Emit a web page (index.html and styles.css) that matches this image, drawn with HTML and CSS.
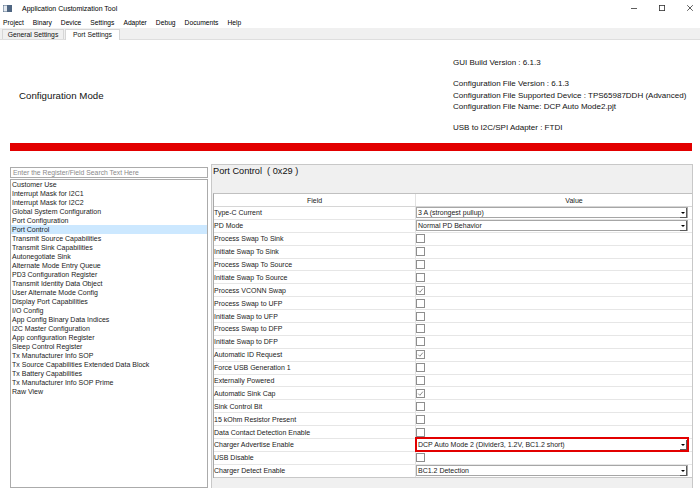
FILE: index.html
```html
<!DOCTYPE html>
<html>
<head>
<meta charset="utf-8">
<title>Application Customization Tool</title>
<link rel="stylesheet" href="styles.css">
</head>
<body>
<div class="titlebar">
  <svg class="appicon" viewBox="0 0 9 7" width="9" height="7"><rect x="0" y="0" width="9" height="7" fill="#4f6682"/><rect x="0.5" y="0.5" width="3.5" height="6" fill="#e4e9ef"/></svg>
  <span class="title">Application Customization Tool</span>
  <div class="controls">
    <svg viewBox="0 0 6 6" width="6" height="6"><path d="M0 3.5 H6" stroke="#333" stroke-width="0.8"/></svg>
    <svg viewBox="0 0 6 6" width="6" height="6"><rect x="0.4" y="0.4" width="5.2" height="5.2" fill="none" stroke="#333" stroke-width="0.8"/></svg>
    <svg viewBox="0 0 6 6" width="6" height="6"><path d="M0.2 0.2 L5.8 5.8 M5.8 0.2 L0.2 5.8" stroke="#333" stroke-width="0.8"/></svg>
  </div>
</div>
<div class="menubar">
  <span>Project</span><span>Binary</span><span>Device</span><span>Settings</span><span>Adapter</span><span>Debug</span><span>Documents</span><span>Help</span>
</div>
<div class="tabs">
  <div class="tab">General Settings</div>
  <div class="tab sel">Port Settings</div>
</div>
<div class="header">
  <div class="mode">Configuration Mode</div>
  <div class="info">
    <p>GUI Build Version : 6.1.3</p>
    <p>Configuration File Version : 6.1.3<br>Configuration File Supported Device : TPS65987DDH (Advanced)<br>Configuration File Name: DCP Auto Mode2.pjt</p>
    <p>USB to I2C/SPI Adapter : FTDI</p>
  </div>
</div>
<div class="redbar"></div>
<div class="main">
  <div class="left">
    <div class="search">Enter the Register/Field Search Text Here</div>
    <ul class="list">
      <li>Customer Use</li>
      <li>Interrupt Mask for I2C1</li>
      <li>Interrupt Mask for I2C2</li>
      <li>Global System Configuration</li>
      <li>Port Configuration</li>
      <li class="active">Port Control</li>
      <li>Transmit Source Capabilities</li>
      <li>Transmit Sink Capabilities</li>
      <li>Autonegotiate Sink</li>
      <li>Alternate Mode Entry Queue</li>
      <li>PD3 Configuration Register</li>
      <li>Transmit Identity Data Object</li>
      <li>User Alternate Mode Config</li>
      <li>Display Port Capabilities</li>
      <li>I/O Config</li>
      <li>App Config Binary Data Indices</li>
      <li>I2C Master Configuration</li>
      <li>App configuration Register</li>
      <li>Sleep Control Register</li>
      <li>Tx Manufacturer Info SOP</li>
      <li>Tx Source Capabilities Extended Data Block</li>
      <li>Tx Battery Capabilities</li>
      <li>Tx Manufacturer Info SOP Prime</li>
      <li>Raw View</li>
    </ul>
  </div>
  <div class="panel">
    <div class="phead">Port Control &nbsp;( 0x29 )</div>
    <div class="grid">
      <div class="row hdr"><div class="f">Field</div><div class="v">Value</div></div>
      <div class="row"><div class="f">Type-C Current</div><div class="v"><div class="combo"><span class="ct">3 A (strongest pullup)</span><span class="arr"></span></div></div></div>
      <div class="row"><div class="f">PD Mode</div><div class="v"><div class="combo"><span class="ct">Normal PD Behavior</span><span class="arr"></span></div></div></div>
      <div class="row"><div class="f">Process Swap To Sink</div><div class="v"><span class="cb"></span></div></div>
      <div class="row"><div class="f">Initiate Swap To Sink</div><div class="v"><span class="cb"></span></div></div>
      <div class="row"><div class="f">Process Swap To Source</div><div class="v"><span class="cb"></span></div></div>
      <div class="row"><div class="f">Initiate Swap To Source</div><div class="v"><span class="cb"></span></div></div>
      <div class="row"><div class="f">Process VCONN Swap</div><div class="v"><span class="cb"><svg viewBox="0 0 7 7" width="7" height="7"><path d="M1.2 3.6 L2.9 5.3 L5.9 1.6" fill="none" stroke="#707070" stroke-width="0.8"/></svg></span></div></div>
      <div class="row"><div class="f">Process Swap to UFP</div><div class="v"><span class="cb"></span></div></div>
      <div class="row"><div class="f">Initiate Swap to UFP</div><div class="v"><span class="cb"></span></div></div>
      <div class="row"><div class="f">Process Swap to DFP</div><div class="v"><span class="cb"></span></div></div>
      <div class="row"><div class="f">Initiate Swap to DFP</div><div class="v"><span class="cb"></span></div></div>
      <div class="row"><div class="f">Automatic ID Request</div><div class="v"><span class="cb"><svg viewBox="0 0 7 7" width="7" height="7"><path d="M1.2 3.6 L2.9 5.3 L5.9 1.6" fill="none" stroke="#707070" stroke-width="0.8"/></svg></span></div></div>
      <div class="row"><div class="f">Force USB Generation 1</div><div class="v"><span class="cb"></span></div></div>
      <div class="row"><div class="f">Externally Powered</div><div class="v"><span class="cb"></span></div></div>
      <div class="row"><div class="f">Automatic Sink Cap</div><div class="v"><span class="cb"><svg viewBox="0 0 7 7" width="7" height="7"><path d="M1.2 3.6 L2.9 5.3 L5.9 1.6" fill="none" stroke="#707070" stroke-width="0.8"/></svg></span></div></div>
      <div class="row"><div class="f">Sink Control Bit</div><div class="v"><span class="cb"></span></div></div>
      <div class="row"><div class="f">15 kOhm Resistor Present</div><div class="v"><span class="cb"></span></div></div>
      <div class="row"><div class="f">Data Contact Detection Enable</div><div class="v"><span class="cb"></span></div></div>
      <div class="row"><div class="f">Charger Advertise Enable</div><div class="v"><div class="combo hl"><span class="ct">DCP Auto Mode 2 (Divider3, 1.2V, BC1.2 short)</span><span class="arr"></span></div></div></div>
      <div class="row"><div class="f">USB Disable</div><div class="v"><span class="cb"></span></div></div>
      <div class="row last"><div class="f">Charger Detect Enable</div><div class="v"><div class="combo"><span class="ct">BC1.2 Detection</span><span class="arr"></span></div></div></div>
    </div>
  </div>
</div>
</body>
</html>
```
FILE: styles.css
```css
* { box-sizing: border-box; margin: 0; padding: 0; }
html, body { width: 700px; height: 488px; overflow: hidden; background: #fff; }
body { font-family: "Liberation Sans", Arial, sans-serif; color: #111; }

.titlebar { height: 16px; display: flex; align-items: center; }
.appicon { margin-left: 3px; flex: none; }
.title { margin-left: 10px; font-size: 7px; color: #000; }
.controls { margin-left: auto; display: flex; align-items: center; gap: 22px; padding-right: 7px; margin-bottom: 1px; }
.controls svg { display: block; }

.menubar { height: 12px; display: flex; align-items: center; padding-left: 3px; gap: 9px; font-size: 6.7px; color: #000; }

.tabs { height: 12px; background: #f0f0f0; border-bottom: 1px solid #dedede; display: flex; align-items: flex-end; padding-left: 2px; }
.tab { width: 62px; height: 10px; border: 1px solid #d6d6d6; border-bottom: none; font-size: 6.8px; line-height: 9px; text-align: center; color: #111; background: #f0f0f0; }
.tab.sel { width: 55px; height: 11px; margin-left: 1px; margin-bottom: -1px; background: #fff; }

.header { height: 103px; display: flex; }
.mode { width: 453px; padding-left: 19px; padding-top: 50px; font-size: 9.7px; line-height: 12px; color: #111; }
.info { padding-top: 17px; font-size: 8px; line-height: 11.5px; color: #111; }
.info p + p { margin-top: 9.5px; }

.redbar { margin-left: 10px; width: 682px; height: 8px; background: #e20000; }

.main { display: flex; height: 337px; }
.left { width: 198px; margin-left: 10px; padding-top: 16px; display: flex; flex-direction: column; }
.search { height: 11px; border: 1px solid #ababab; font-size: 6.8px; line-height: 9px; padding-left: 2px; color: #8a8a8a; }
.list { list-style: none; margin-top: 1px; flex: 1; border: 1px solid #ababab; font-size: 7px; line-height: 9px; color: #1a1a1a; }
.list li { padding-left: 1px; height: 9px; white-space: nowrap; }
.list li.active { background: #cce8ff; }

.panel { width: 482px; margin-left: 3px; margin-top: 13px; border: 1px solid #c8c8c8; border-bottom: none; background: #f0f0f0; }
.phead { height: 28px; padding: 1px 0 0 1px; font-size: 9.2px; line-height: 11px; color: #111; }
.grid { margin-left: 1px; border-left: 1px solid #a8a8a8; border-top: 1px solid #c0c0c0; background: #fff; }
.row { display: flex; height: 12.9px; border-bottom: 1px solid #e6e6e6; font-size: 7px; color: #1a1a1a; }
.row.hdr { height: 13px; border-bottom: 1px solid #d6d6d6; }
.row.last { border-bottom: 1px solid #c8c8c8; }
.f { width: 202px; flex: none; border-right: 1px solid #e2e2e2; display: flex; align-items: center; white-space: nowrap; }
.v { flex: 1; display: flex; align-items: center; white-space: nowrap; }
.hdr .f { justify-content: center; }
.hdr .v { justify-content: center; padding-left: 40px; }

.combo { width: 272px; height: 11px; border: 1px solid #a6a6a6; display: flex; align-items: center; background: #fff; }
.combo .ct { flex: 1; padding-left: 1px; font-size: 7px; line-height: 9px; overflow: hidden; }
.combo .arr { width: 7px; height: 10px; margin-bottom: -1px; border-right: 1px solid #5a5a5a; border-bottom: 1px solid #5a5a5a; display: flex; align-items: center; justify-content: center; }
.combo .arr::before { content: ""; border-left: 2px solid transparent; border-right: 2px solid transparent; border-top: 2.5px solid #000; }
.combo.hl { height: 13px; outline: 2px solid #e20000; outline-offset: -1px; }

.cb { width: 9px; height: 9px; border: 1px solid #8e8e8e; background: #fff; display: flex; align-items: center; justify-content: center; }
.cb svg { display: block; }
```
